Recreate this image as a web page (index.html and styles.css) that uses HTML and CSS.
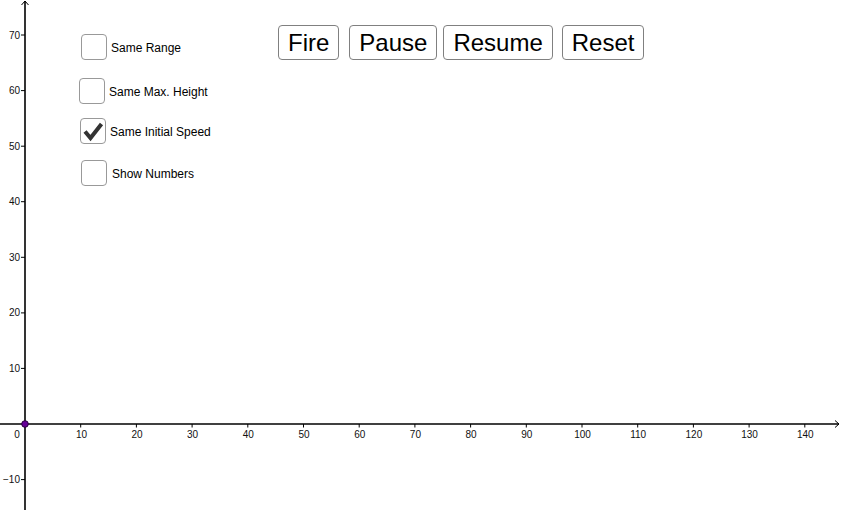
FILE: index.html
```html
<!DOCTYPE html>
<html>
<head>
<meta charset="utf-8">
<link rel="stylesheet" href="styles.css">
</head>
<body>
<div class="stage">
  <svg class="axes" width="842" height="510" viewBox="0 0 842 510">
    <g stroke="#000" stroke-width="1.6" fill="none">
      <line x1="25" y1="1" x2="25" y2="510"/>
      <line x1="0" y1="424" x2="839" y2="424"/>
      <polyline points="21.5,5 25,1 28.5,5" stroke-width="1"/>
      <polyline points="835,420.5 839,424 835,427.5" stroke-width="1"/>
    </g>
    <g stroke="#000" stroke-width="1">
      <line x1="80.7" y1="424" x2="80.7" y2="427.5"/>
      <line x1="136.4" y1="424" x2="136.4" y2="427.5"/>
      <line x1="192.1" y1="424" x2="192.1" y2="427.5"/>
      <line x1="247.8" y1="424" x2="247.8" y2="427.5"/>
      <line x1="303.5" y1="424" x2="303.5" y2="427.5"/>
      <line x1="359.2" y1="424" x2="359.2" y2="427.5"/>
      <line x1="414.9" y1="424" x2="414.9" y2="427.5"/>
      <line x1="470.6" y1="424" x2="470.6" y2="427.5"/>
      <line x1="526.3" y1="424" x2="526.3" y2="427.5"/>
      <line x1="582" y1="424" x2="582" y2="427.5"/>
      <line x1="637.7" y1="424" x2="637.7" y2="427.5"/>
      <line x1="693.4" y1="424" x2="693.4" y2="427.5"/>
      <line x1="749.1" y1="424" x2="749.1" y2="427.5"/>
      <line x1="804.8" y1="424" x2="804.8" y2="427.5"/>
      <line x1="21" y1="35" x2="25" y2="35"/>
      <line x1="21" y1="90.6" x2="25" y2="90.6"/>
      <line x1="21" y1="146.2" x2="25" y2="146.2"/>
      <line x1="21" y1="201.7" x2="25" y2="201.7"/>
      <line x1="21" y1="257.3" x2="25" y2="257.3"/>
      <line x1="21" y1="312.9" x2="25" y2="312.9"/>
      <line x1="21" y1="368.4" x2="25" y2="368.4"/>
      <line x1="21" y1="479.6" x2="25" y2="479.6"/>
    </g>
    <g class="xlab" text-anchor="middle">
      <text x="17" y="438">0</text>
      <text x="81.5" y="438">10</text>
      <text x="137" y="438">20</text>
      <text x="192.6" y="438">30</text>
      <text x="248.3" y="438">40</text>
      <text x="304" y="438">50</text>
      <text x="359.7" y="438">60</text>
      <text x="415.4" y="438">70</text>
      <text x="471.1" y="438">80</text>
      <text x="526.8" y="438">90</text>
      <text x="582.5" y="438">100</text>
      <text x="638.2" y="438">110</text>
      <text x="693.9" y="438">120</text>
      <text x="749.6" y="438">130</text>
      <text x="805.3" y="438">140</text>
    </g>
    <g class="ylab" text-anchor="end">
      <text x="20" y="38.5">70</text>
      <text x="20" y="94.1">60</text>
      <text x="20" y="149.7">50</text>
      <text x="20" y="205.2">40</text>
      <text x="20" y="260.8">30</text>
      <text x="20" y="316.4">20</text>
      <text x="20" y="371.9">10</text>
      <text x="20" y="483.1">−10</text>
    </g>
    <circle cx="25" cy="424" r="3.3" fill="#660099" stroke="#2a003f" stroke-width="1"/>
  </svg>

  <div class="controls">
    <div class="checks">
      <label class="check c1"><span class="box"></span><span class="lbl">Same Range</span></label>
      <label class="check c2"><span class="box"></span><span class="lbl">Same Max. Height</span></label>
      <label class="check c3"><span class="box"><svg class="tick" width="24" height="24" viewBox="0 0 24 24"><path d="M4 12.5 L9.5 19 L20.5 5" fill="none" stroke="#333" stroke-width="4" stroke-linejoin="miter" stroke-linecap="butt"/></svg></span><span class="lbl">Same Initial Speed</span></label>
      <label class="check c4"><span class="box"></span><span class="lbl">Show Numbers</span></label>
    </div>
    <div class="buttons">
      <button class="btn">Fire</button>
      <button class="btn b-pause">Pause</button>
      <button class="btn b-resume">Resume</button>
      <button class="btn b-reset">Reset</button>
    </div>
  </div>
</div>
</body>
</html>
```
FILE: styles.css
```css
html, body {
  margin: 0;
  padding: 0;
  background: #fff;
  overflow: hidden;
}
.stage {
  position: relative;
  width: 842px;
  height: 510px;
  font-family: "Liberation Sans", Arial, sans-serif;
  color: #000;
}
.axes {
  position: absolute;
  left: 0;
  top: 0;
}
.xlab text, .ylab text {
  font-family: "Liberation Sans", Arial, sans-serif;
  font-size: 10px;
  fill: #111;
}
.controls {
  position: relative;
  display: flex;
  align-items: flex-start;
}
.checks {
  width: 199px;
  margin-left: 79px;
  padding-top: 34px;
  display: flex;
  flex-direction: column;
}
.check {
  display: flex;
  align-items: center;
  gap: 4px;
  font-size: 12px;
  line-height: 16px;
}
.lbl {
  position: relative;
  top: 1px;
}
.box {
  box-sizing: border-box;
  width: 26px;
  height: 26px;
  border: 1.5px solid #999;
  border-radius: 4px;
  background: #fff;
  display: flex;
  align-items: center;
  justify-content: center;
}
.c1 { margin-left: 2px; }
.c2 { margin-top: 18px; }
.c3 { margin-top: 14px; margin-left: 1px; }
.c4 { margin-top: 16px; margin-left: 2px; }
.c4 .lbl { margin-left: 1px; }
.buttons {
  display: flex;
  padding-top: 25px;
}
.btn {
  box-sizing: border-box;
  height: 35px;
  padding: 0 9px;
  border: 1px solid #808080;
  border-radius: 4px;
  background: #fff;
  font-family: "Liberation Sans", Arial, sans-serif;
  font-size: 24px;
  color: #000;
  line-height: 33px;
}
.b-pause { margin-left: 10px; }
.b-resume { margin-left: 6px; }
.b-reset { margin-left: 9px; }
```
